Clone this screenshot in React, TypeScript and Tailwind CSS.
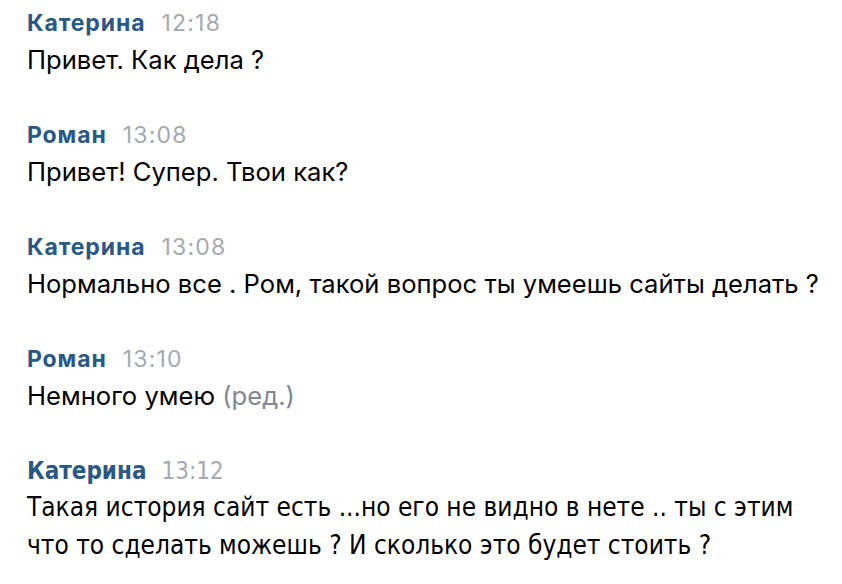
const msgs = [
  { name: "Катерина", time: "12:18", lines: ["Привет. Как дела ?"] },
  { name: "Роман", time: "13:08", lines: ["Привет! Супер. Твои как?"] },
  { name: "Катерина", time: "13:08", lines: ["Нормально все . Ром, такой вопрос ты умеешь сайты делать ?"] },
  { name: "Роман", time: "13:10", lines: ["Немного умею"], edited: true },
];

function Header({ name, time, condensed }: { name: string; time: string; condensed?: boolean }) {
  if (condensed) {
    return (
      <div className="flex items-baseline gap-[15px] h-[24px] leading-[24px]">
        <span className="text-[24px] font-bold text-[#2a5885]">{name}</span>
        <span className="text-[24px] text-[#a3a9b1]">{time}</span>
      </div>
    );
  }
  return (
    <div className="flex items-baseline gap-[16px] h-[24px] leading-[24px]">
      <span className="text-[23px] font-bold tracking-[0.9px] text-[#2a5885]">{name}</span>
      <span className="text-[23px] tracking-[1.2px] text-[#a3a9b1]">{time}</span>
    </div>
  );
}

export default function App() {
  return (
    <div className="w-[842px] h-[584px] bg-white overflow-hidden pl-[27px] pt-[11px] font-['Inter','Roboto',sans-serif] text-black">
      {msgs.map((m, i) => (
        <div key={i} className="h-[112px]">
          <Header name={m.name} time={m.time} />
          <div className="mt-[11px] text-[25.6px] leading-[28px]">
            {m.lines[0]}
            {m.edited && <span className="text-[#7f8792]"> (ред.)</span>}
          </div>
        </div>
      ))}
      <div className="font-['DejaVu_Sans',sans-serif] [font-stretch:condensed]">
        <Header name="Катерина" time="13:12" condensed />
        <div className="mt-[5px] text-[26px] leading-[38px]">
          <div>Такая история сайт есть ...но его не видно в нете .. ты с этим</div>
          <div>что то сделать можешь ? И сколько это будет стоить ?</div>
        </div>
      </div>
    </div>
  );
}
